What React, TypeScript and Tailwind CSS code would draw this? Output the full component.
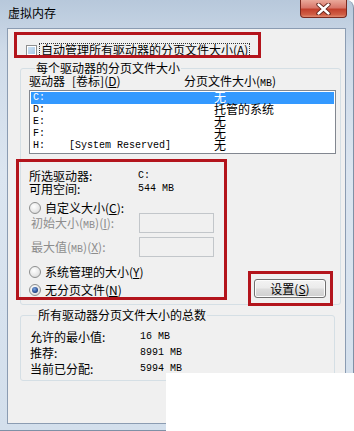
import React from "react";

const mono = "font-['Liberation_Mono','Noto_Sans_CJK_SC',monospace] text-[10px]";

function Radio({ checked }: { checked?: boolean }) {
  return (
    <span className="w-[12px] h-[12px] shrink-0 rounded-full border border-[#8e8f8f] bg-[radial-gradient(circle_at_40%_35%,#ffffff_0%,#e6e6e6_60%,#c9c9c9_100%)] flex items-center justify-center">
      {checked && (
        <span className="w-[6px] h-[6px] rounded-full bg-[radial-gradient(circle_at_40%_35%,#7aa6e0_0%,#1d3e84_70%,#10224d_100%)]" />
      )}
    </span>
  );
}

function Row({ drive, label, size, selected }: { drive: string; label?: string; size: string; selected?: boolean }) {
  return (
    <div
      className={
        "h-[12px] grid grid-cols-[181px_1fr] items-center pl-[2px] leading-[12px] " +
        (selected ? "bg-[#3399ff] text-white" : "text-black")
      }
    >
      <span className={mono + " whitespace-pre leading-[12px]"}>
        {drive}
        {label ? "    " + label : ""}
      </span>
      <span className="font-['Liberation_Sans','Noto_Sans_CJK_SC',sans-serif] text-[12px] leading-[12px]">{size}</span>
    </div>
  );
}

export default function App() {
  return (
    <div className="relative w-[354px] h-[431px] overflow-hidden bg-white text-[12px] text-black font-['Noto_Sans_CJK_SC','Noto_Sans',sans-serif]">
      <div className="w-[354px] h-[431px] rounded-tr-[8px] border-r border-b border-[#7f90a6] bg-[linear-gradient(180deg,#b7c8db_0%,#cfdbe9_12%,#dbe5f0_40%,#d3dfec_100%)] flex flex-col">
        {/* title bar */}
        <div className="h-[28px] flex items-start justify-between shrink-0">
          <span className="pl-[8px] pt-[6px] leading-[14px] text-[12px]">虚拟内存</span>
          <div className="mr-[6px] w-[47px] h-[18px] rounded-b-[4px] border border-t-0 border-[#7a2a20] bg-[linear-gradient(180deg,#eaa99a_0%,#d8776a_45%,#c2402c_55%,#cf5d44_85%,#e08a70_100%)] flex items-center justify-center">
            <svg width="15" height="12" viewBox="0 0 15 12">
              <path d="M2.5 1.5 L12.5 10.5 M12.5 1.5 L2.5 10.5" stroke="#5a1d14" strokeWidth="4.2" strokeLinecap="round" />
              <path d="M2.5 1.5 L12.5 10.5 M12.5 1.5 L2.5 10.5" stroke="#ffffff" strokeWidth="2.4" strokeLinecap="round" />
            </svg>
          </div>
        </div>

        {/* content */}
        <div className="mx-[7px] h-[396px] shrink-0 border border-[#8b9cb2] bg-[#f0f0f0] flex flex-col">
          {/* checkbox */}
          <div className="mt-[14px] pl-[18px] h-[14px] flex items-center gap-[2px]">
            <span className="w-[11px] h-[11px] border border-[#8e8f8f] bg-white p-[1px] shrink-0">
              <span className="block w-full h-full bg-[linear-gradient(135deg,#cde2f4_0%,#a8c9e8_100%)]" />
            </span>
            <span className="border border-dotted border-[#333] px-[1px] leading-[12px]">
              自动管理所有驱动器的分页文件大小(<span className="underline">A</span>)
            </span>
          </div>

          {/* group 1 */}
          <fieldset className="mt-[4px] ml-[12px] w-[321px] border border-[#d5dfe5] rounded-[3px] pl-[8px] pb-[6px]">
            <legend className="ml-[6px] px-[1px] h-[14px] leading-[14px]">每个驱动器的分页文件大小</legend>
            <div className="h-[12px] leading-[12px] flex">
              <span className="w-[155px]">
                驱动器<span className="ml-[7px]">[卷标](<span className="underline">D</span>)</span>
              </span>
              <span>
                分页文件大小(<span className={mono}>MB</span>)
              </span>
            </div>
            <div className="mt-[3px] w-[307px] h-[64px] border border-[#828790] bg-white p-[1px]">
              <Row drive="C:" size="无" selected />
              <Row drive="D:" size="托管的系统" />
              <Row drive="E:" size="无" />
              <Row drive="F:" size="无" />
              <Row drive="H:" label="[System Reserved]" size="无" />
            </div>

            <div className="mt-[15px] grid grid-cols-[109px_1fr] leading-[13px]">
              <span>所选驱动器:</span>
              <span className={mono + " leading-[13px]"}>C:</span>
              <span>可用空间:</span>
              <span className={mono + " leading-[13px]"}>544 MB</span>
            </div>

            <div className="mt-[7px] h-[12px] flex items-center gap-[4px]">
              <Radio />
              <span className="leading-[12px]">
                自定义大小(<span className="underline">C</span>):
              </span>
            </div>
            <div className="-mt-px h-[20px] flex items-center text-[#8d8d8d]">
              <span className="w-[110px] pl-[2px]">
                初始大小(<span className={mono}>MB</span>)(<span className="underline">I</span>):
              </span>
              <span className="w-[75px] h-[20px] border border-[#c2c6ca] bg-[#f0f0f0]" />
            </div>
            <div className="mt-[4px] h-[20px] flex items-center text-[#8d8d8d]">
              <span className="w-[110px] pl-[2px]">
                最大值(<span className={mono}>MB</span>)(<span className="underline">X</span>):
              </span>
              <span className="w-[75px] h-[20px] border border-[#c2c6ca] bg-[#f0f0f0]" />
            </div>

            <div className="mt-[8px] flex justify-between items-end">
              <div className="flex flex-col">
                <div className="h-[14px] flex items-center gap-[4px]">
                  <Radio />
                  <span className="leading-[14px]">
                    系统管理的大小(<span className="underline">Y</span>)
                  </span>
                </div>
                <div className="mt-[3px] h-[16px] flex items-center gap-[4px]">
                  <Radio checked />
                  <span className="leading-[14px]">
                    无分页文件(<span className="underline">N</span>)
                  </span>
                </div>
              </div>
              <div className="mr-[14px] w-[72px] h-[19px] rounded-[3px] border border-[#707070] bg-[linear-gradient(180deg,#f3f3f3_0%,#ebebeb_48%,#dddddd_52%,#cfcfcf_100%)] shadow-[inset_0_0_0_1px_#fcfcfc] flex items-center justify-center leading-[14px]">
                设置(<span className="underline">S</span>)
              </div>
            </div>
          </fieldset>

          {/* group 2 */}
          <fieldset className="mt-[3px] ml-[12px] w-[315px] border border-[#d5dfe5] rounded-[3px] pl-[9px] pt-[7px] pb-[3px]">
            <legend className="ml-[7px] px-[1px] h-[14px] leading-[14px]">所有驱动器分页文件大小的总数</legend>
            <div className="grid grid-cols-[110px_1fr] leading-[16px]">
              <span>允许的最小值:</span>
              <span className={mono + " leading-[16px]"}>16 MB</span>
              <span>推荐:</span>
              <span className={mono + " leading-[16px]"}>8991 MB</span>
              <span>当前已分配:</span>
              <span className={mono + " leading-[16px]"}>5994 MB</span>
            </div>
          </fieldset>
        </div>
      </div>

      {/* annotations */}
      <div className="absolute left-[14px] top-[32px] w-[247px] h-[26px] border-[3px] border-[#b3141c]" />
      <div className="absolute left-[16px] top-[159px] w-[211px] h-[141px] border-[3px] border-[#b3141c]" />
      <div className="absolute left-[248px] top-[271px] w-[85px] h-[35px] border-[3px] border-[#b3141c]" />
      <div className="absolute left-[166px] top-[373px] w-[188px] h-[58px] bg-white" />
    </div>
  );
}
